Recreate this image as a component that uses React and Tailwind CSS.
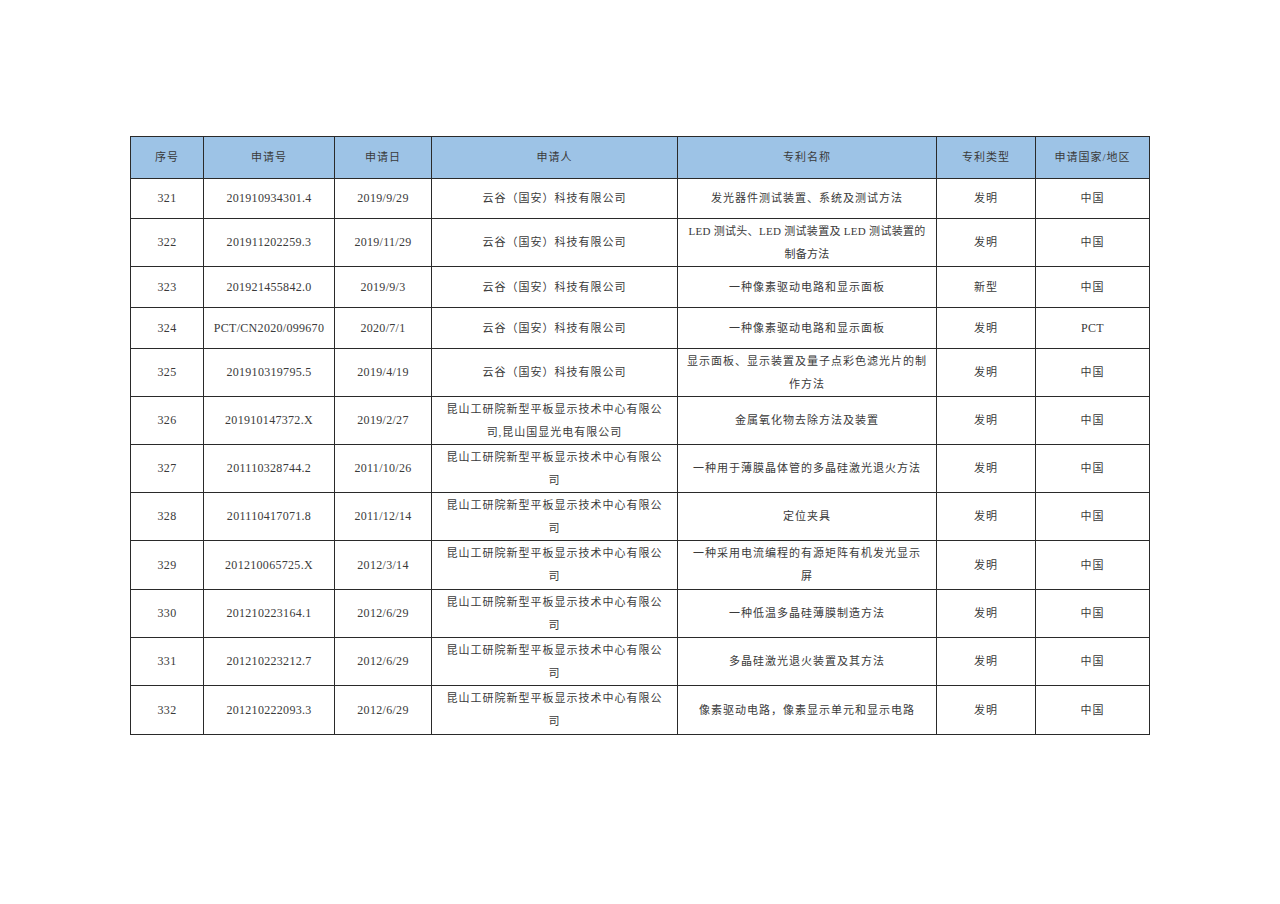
const rows = [
  { n: "321", no: "201910934301.4", d: "2019/9/29", a: ["云谷（国安）科技有限公司"], t: ["发光器件测试装置、系统及测试方法"], k: "发明", c: "中国", h: "h-[40px]" },
  { n: "322", no: "201911202259.3", d: "2019/11/29", a: ["云谷（国安）科技有限公司"], t: ["LED 测试头、LED 测试装置及 LED 测试装置的", "制备方法"], k: "发明", c: "中国", h: "h-[48px]", tight: true },
  { n: "323", no: "201921455842.0", d: "2019/9/3", a: ["云谷（国安）科技有限公司"], t: ["一种像素驱动电路和显示面板"], k: "新型", c: "中国", h: "h-[41px]" },
  { n: "324", no: "PCT/CN2020/099670", d: "2020/7/1", a: ["云谷（国安）科技有限公司"], t: ["一种像素驱动电路和显示面板"], k: "发明", c: "PCT", h: "h-[41px]" },
  { n: "325", no: "201910319795.5", d: "2019/4/19", a: ["云谷（国安）科技有限公司"], t: ["显示面板、显示装置及量子点彩色滤光片的制", "作方法"], k: "发明", c: "中国", h: "h-[48px]" },
  { n: "326", no: "201910147372.X", d: "2019/2/27", a: ["昆山工研院新型平板显示技术中心有限公", "司,昆山国显光电有限公司"], t: ["金属氧化物去除方法及装置"], k: "发明", c: "中国", h: "h-[48px]" },
  { n: "327", no: "201110328744.2", d: "2011/10/26", a: ["昆山工研院新型平板显示技术中心有限公", "司"], t: ["一种用于薄膜晶体管的多晶硅激光退火方法"], k: "发明", c: "中国", h: "h-[48px]" },
  { n: "328", no: "201110417071.8", d: "2011/12/14", a: ["昆山工研院新型平板显示技术中心有限公", "司"], t: ["定位夹具"], k: "发明", c: "中国", h: "h-[48px]" },
  { n: "329", no: "201210065725.X", d: "2012/3/14", a: ["昆山工研院新型平板显示技术中心有限公", "司"], t: ["一种采用电流编程的有源矩阵有机发光显示", "屏"], k: "发明", c: "中国", h: "h-[49px]" },
  { n: "330", no: "201210223164.1", d: "2012/6/29", a: ["昆山工研院新型平板显示技术中心有限公", "司"], t: ["一种低温多晶硅薄膜制造方法"], k: "发明", c: "中国", h: "h-[48px]" },
  { n: "331", no: "201210223212.7", d: "2012/6/29", a: ["昆山工研院新型平板显示技术中心有限公", "司"], t: ["多晶硅激光退火装置及其方法"], k: "发明", c: "中国", h: "h-[48px]" },
  { n: "332", no: "201210222093.3", d: "2012/6/29", a: ["昆山工研院新型平板显示技术中心有限公", "司"], t: ["像素驱动电路，像素显示单元和显示电路"], k: "发明", c: "中国", h: "h-[49px]" },
];

const cell = "border border-[#2a2a2a] text-center align-middle p-0";
const cjk = "text-[11px] tracking-[1px] leading-[23px]";
const num = "text-[12px] tracking-[0.3px] leading-[23px]";

function Lines({ lines, tight }) {
  return (
    <div className={`whitespace-nowrap ${tight ? "tracking-[0.3px]" : ""}`}>
      {lines.map((l, i) => (
        <div key={i}>{l}</div>
      ))}
    </div>
  );
}

export default function App() {
  return (
    <div
      className="w-[1280px] h-[904px] bg-white text-[#3a3a3a]"
      style={{ fontFamily: '"Liberation Serif", "Noto Sans CJK SC", serif' }}
    >
      <div className="pt-[136px] pl-[130px]">
        <table className="border-collapse table-fixed w-[1019px]">
          <colgroup>
            <col className="w-[73px]" />
            <col className="w-[131px]" />
            <col className="w-[97px]" />
            <col className="w-[246px]" />
            <col className="w-[259px]" />
            <col className="w-[99px]" />
            <col className="w-[114px]" />
          </colgroup>
          <thead>
            <tr className="bg-[#9dc3e6]">
              {["序号", "申请号", "申请日", "申请人", "专利名称", "专利类型", "申请国家/地区"].map((h) => (
                <th key={h} className={`${cell} ${cjk} font-normal h-[42px]`}>
                  {h}
                </th>
              ))}
            </tr>
          </thead>
          <tbody>
            {rows.map((r) => (
              <tr key={r.n}>
                <td className={`${cell} ${num} ${r.h}`}>{r.n}</td>
                <td className={`${cell} ${num}`}>{r.no}</td>
                <td className={`${cell} ${num}`}>{r.d}</td>
                <td className={`${cell} ${cjk}`}>
                  <Lines lines={r.a} />
                </td>
                <td className={`${cell} ${cjk}`}>
                  <Lines lines={r.t} tight={r.tight} />
                </td>
                <td className={`${cell} ${cjk}`}>{r.k}</td>
                <td className={`${cell} ${r.c === "PCT" ? num : cjk}`}>{r.c}</td>
              </tr>
            ))}
          </tbody>
        </table>
      </div>
    </div>
  );
}
